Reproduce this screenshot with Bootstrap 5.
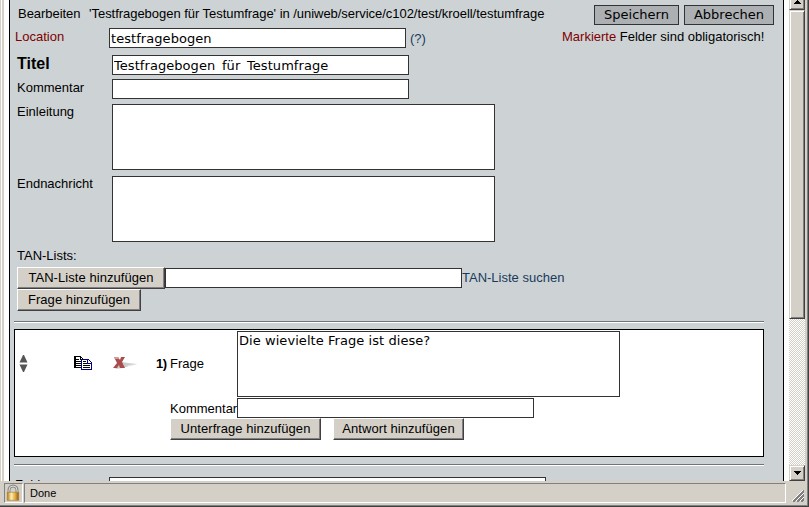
<!DOCTYPE html>
<html lang="de">
<head>
<meta charset="utf-8">
<meta name="viewport" content="width=device-width, initial-scale=1">
<title>Testfragebogen für Testumfrage</title>
<link href="https://cdn.jsdelivr.net/npm/bootstrap@5.3.0/dist/css/bootstrap.min.css" rel="stylesheet">
<style>
body{width:809px;height:507px;overflow:hidden;background:#d4d0c8;color:#000;font:13px/16px "Liberation Sans",Arial,sans-serif;}
/* browser window frame */
.window{height:507px;border-right:1px solid #404040;border-bottom:1px solid #404040;}
.window-in{border-right:1px solid #808080;border-bottom:1px solid #808080;}
.edge-left{width:4px;border-left:1px solid #d4d0c8;box-shadow:inset 1px 0 #fff;}
.viewport{height:481px;}
.page-area{width:785px;background:#fff;padding:0 1px 0 5px;}
.panel{width:775px;background:#cdd3d5;border-left:1px solid #000;border-right:1px solid #000;height:481px;}
/* controls */
.line{height:16px;white-space:nowrap;}
.form-control{border:1px solid #333;border-radius:0;padding:0 1px;background:#fff;color:#000;font:13px/18px "DejaVu Sans",Verdana,sans-serif;letter-spacing:.06px;flex:none;resize:none;overflow:hidden;min-height:0;}
input.form-control{width:297px;height:20px;}
textarea.form-control{width:383px;height:66px;}
input.wide{width:437px;}
.titel-in{word-spacing:2.5px;}
.lbl{width:95px;flex:none;white-space:nowrap;}
.req{color:#800000;}
.lnk{color:#1a3a5c;text-decoration:none;}
.btn{--bs-btn-border-radius:0;padding:0;font:13px/18px "Liberation Sans",Arial,sans-serif;color:#000;white-space:nowrap;flex:none;}
.btn-raised{height:22px;background:#d4d0c8;border:1px solid;border-color:#fff #404040 #404040 #fff;box-shadow:inset -1px -1px #808080;letter-spacing:.06px;}
.btn-flat{height:20px;background:#adb0b3;border:1px solid #333;font-family:"DejaVu Sans",Verdana,sans-serif;margin-top:5px;}
.rule{height:2px;width:750px;border-top:1px solid #707477;border-bottom:1px solid #fff;margin-left:4px;}
.w-save{width:85px}.w-cancel{width:90px;margin-left:5px}.w-tan{width:148px}.w-q{width:124px}.w-sub{width:151px}.w-ans{width:131px}
svg{display:block;flex:none;}
/* form rows */
.row-head{height:28px}
.t-head{margin:6px 0 0 8px;width:576px;letter-spacing:-.04px}
.t-path{margin-left:5px}
.row-loc{height:27px;padding-left:5px}.row-loc .lbl{width:94px;padding-top:1px}
.t-help{margin:3px 0 0 4px;width:152px}.t-req{margin-top:1px}
.row-f{padding-left:7px}.r20{height:24px}.r20b{height:25px}.r66{height:72px}
.r20b .lbl{padding-top:1px}
.titel{font-size:16px;padding-top:1px}
.t-tan{height:19px}
.tanrow{height:22px}
.row-last{margin-top:11px;padding-left:5px}.row-last .lbl{width:94px}
/* question block */
.mt10{margin-top:10px}.mt7{margin-top:7px}
.question{width:750px;height:128px;margin:6px 0 0 4px;border:1px solid #000;background:#fff;}
.tools{width:141px}.i-sort{margin:25px 0 0 4px}.i-copy{margin:26px 0 0 46px}.i-del{margin:27px 0 0 20px}
.t-num{width:14px;margin-top:25px;letter-spacing:-.5px}.qlbl{width:67px;flex:none;white-space:nowrap}
.qbody{padding-top:1px}.q1{height:67px}.q1 .qlbl{margin-top:25px}.q2{height:20px}.q2 .qlbl{padding-top:1px}.gap12{gap:12px}
/* scrollbar */
.scroll{width:16px;background:repeating-conic-gradient(#fff 0 25%,#d4d0c8 0 50%) 0 0/2px 2px;}
.sb{background:#d4d0c8;border:1px solid;border-color:#d4d0c8 #404040 #404040 #d4d0c8;box-shadow:inset 1px 1px #fff,inset -1px -1px #808080;}
.s-up{height:10px;padding-bottom:5px;border-top:0;box-shadow:inset 1px 0 #fff,inset -1px -1px #808080}.s-thumb{height:309px}.s-down{height:16px}
/* status bar */
.sunken{height:20px;border:1px solid;border-color:#808080 #fff #fff #808080;}
.lockbox{width:19px;margin:2px 1px 0 4px}
.donebox{width:762px;margin-top:2px;padding-left:5px;font-size:11px;line-height:18px}
.grip{margin:9px 0 0 6px}
</style>
<script src="https://cdn.jsdelivr.net/npm/bootstrap@5.3.0/dist/js/bootstrap.bundle.min.js"></script>
</head>
<body>
<div class="window"><div class="window-in h-100 d-flex flex-column">
  <div class="viewport d-flex overflow-hidden">
    <div class="edge-left"></div>
    <main class="page-area">
      <div class="panel overflow-hidden">
        <div class="d-flex row-head">
          <div class="line t-head">Bearbeiten <span class="t-path">'Testfragebogen für Testumfrage' in /uniweb/service/c102/test/kroell/testumfrage</span></div>
          <button class="btn btn-flat w-save">Speichern</button>
          <button class="btn btn-flat w-cancel">Abbrechen</button>
        </div>
        <div class="d-flex row-loc">
          <label class="lbl req">Location</label>
          <input class="form-control" value="testfragebogen">
          <a class="lnk t-help">(?)</a>
          <div class="line t-req"><span class="req">Markierte</span> Felder sind obligatorisch!</div>
        </div>
        <div class="d-flex row-f r20"><label class="lbl titel fw-bold">Titel</label><input class="form-control titel-in" value="Testfragebogen für Testumfrage"></div>
        <div class="d-flex row-f r20b"><label class="lbl">Kommentar</label><input class="form-control"></div>
        <div class="d-flex row-f r66"><label class="lbl">Einleitung</label><textarea class="form-control"></textarea></div>
        <div class="d-flex row-f r66"><label class="lbl">Endnachricht</label><textarea class="form-control"></textarea></div>
        <div class="line row-f t-tan">TAN-Lists:</div>
        <div class="d-flex row-f align-items-center tanrow"><button class="btn btn-raised w-tan">TAN-Liste hinzufügen</button><input class="form-control"><a class="lnk">TAN-Liste suchen</a></div>
        <div class="row-f d-flex"><button class="btn btn-raised w-q">Frage hinzufügen</button></div>
        <div class="rule mt10"></div>
        <section class="question d-flex">
          <div class="tools d-flex align-items-start">
            <svg class="i-sort" width="9" height="18" viewBox="0 0 9 18"><path fill="#555" d="M4 0h1l3.500 7.500h-8zM.5 9.500h8L5 17H4z"/></svg>
            <svg class="i-copy" width="19" height="15" viewBox="0 0 19 15" shape-rendering="crispEdges"><path fill="#fff" stroke="#000" d="M.5.5h6l3 3v8h-9z"/><path stroke="#000" d="M1.500 1v10M6.500 0v4M2 3.500h3M2 5.500h5M2 7.500h5M2 9.500h5"/><path fill="#fff" stroke="#000080" d="M7.500 3.500h7l3 3v7h-10z"/><path fill="none" stroke="#000080" d="M13.500 3.500v4h4"/><path stroke="#000" d="M9 5.500h3M9 7.500h4M9 9.500h7M9 11.500h7"/></svg>
            <svg class="i-del" width="26" height="13" viewBox="0 0 26 13"><path fill="#ccc" d="M9 5l6 1 9 1-8 2-6 2-8 1z"/><path fill="#e5e5e5" d="M14 8l10-1-8 2z"/><path fill="#a84c4c" d="M1 0h4l2 3 1-3h4L9 5l3 6H7L6 8l-2 3H0l4-5z"/><path fill="#d39a9a" d="M1 0h4l1 2H2z"/></svg>
          </div>
          <div class="d-flex qbody">
            <b class="t-num">1)</b>
            <div>
              <div class="d-flex align-items-start q1"><label class="qlbl">Frage</label><textarea class="form-control">Die wievielte Frage ist diese?</textarea></div>
              <div class="d-flex align-items-center q2"><label class="qlbl">Kommentar</label><input class="form-control"></div>
              <div class="d-flex gap12"><button class="btn btn-raised w-sub">Unterfrage hinzufügen</button><button class="btn btn-raised w-ans">Antwort hinzufügen</button></div>
            </div>
          </div>
        </section>
        <div class="rule mt7"></div>
        <div class="d-flex row-last"><label class="lbl">Felder</label><input class="form-control wide"></div>
      </div>
    </main>
    <div class="scroll d-flex flex-column">
      <div class="sb s-up d-flex justify-content-center align-items-end"><svg width="7" height="4" shape-rendering="crispEdges"><path d="M3 0h1v1h1v1h1v1h1v1H0V3h1V2h1V1h1z"/></svg></div>
      <div class="sb s-thumb"></div>
      <div class="sb s-down mt-auto d-flex justify-content-center align-items-center"><svg width="7" height="4" shape-rendering="crispEdges"><path d="M0 0h7v1H6v1H5v1H4v1H3V3H2V2H1V1H0z"/></svg></div>
    </div>
  </div>
  <footer class="d-flex">
    <div class="sunken lockbox"><svg width="16" height="18" viewBox="0 0 16 18"><defs><linearGradient id="brass"><stop stop-color="#b87a18"/><stop offset=".35" stop-color="#fff0b0"/><stop offset=".7" stop-color="#e0a83c"/><stop offset="1" stop-color="#8c5810"/></linearGradient></defs><path fill="none" stroke="#888880" stroke-width="3" d="M4 10V6a4 4 0 0 1 8 0v4"/><path fill="none" stroke="#ddd" d="M4 10V6a4 4 0 0 1 8 0v4"/><path fill="url(#brass)" stroke="#a87828" stroke-width=".6" d="M2.300 8.300h11.400v8H2.300z"/></svg></div>
    <div class="sunken donebox">Done</div>
    <svg class="grip" width="12" height="12" viewBox="0 0 12 12" shape-rendering="crispEdges"><path stroke="#808080" stroke-width="1.500" d="M1 12L12 1M5 12l7-7M9 12l3-3"/><path stroke="#fff" d="M0 11L11 0M4 11l8-8M8 11l4-4"/></svg>
  </footer>
</div></div>
</body>
</html>
